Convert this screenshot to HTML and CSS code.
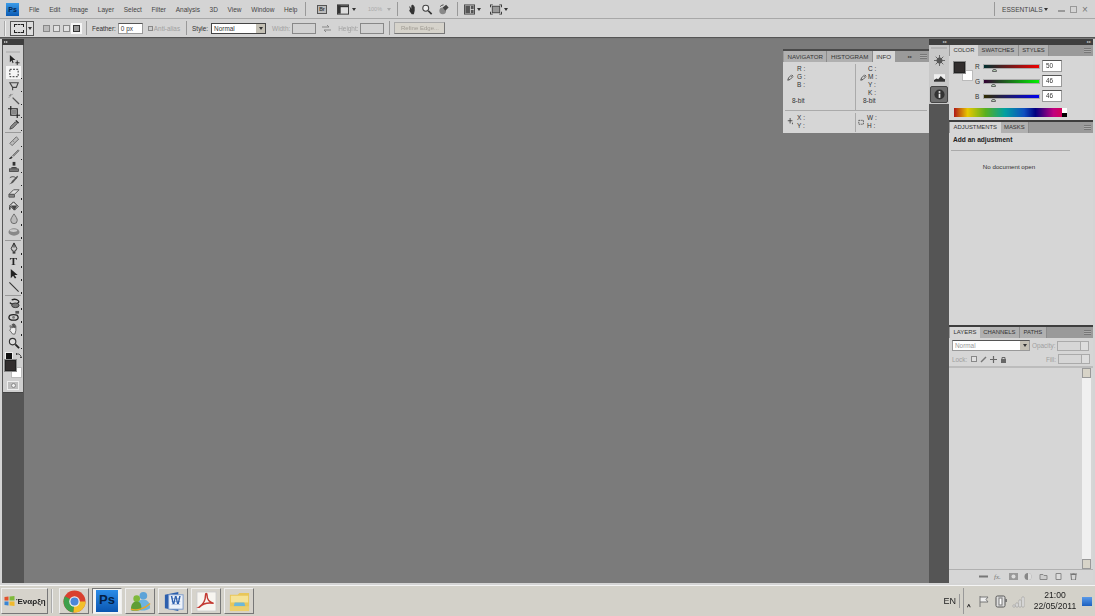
FILE: index.html
```html
<!DOCTYPE html>
<html lang="en">
<head>
    <meta charset="utf-8">
    <title>Adobe Photoshop CS4</title>
    <link rel="stylesheet" href="styles.css">
</head>
<body>
    <div class="menu-bar">
        <div class="ps-logo">Ps</div>
        <nav class="menu-items">
            <span>File</span><span>Edit</span><span>Image</span><span>Layer</span><span>Select</span><span>Filter</span><span>Analysis</span><span>3D</span><span>View</span><span>Window</span><span>Help</span>
        </nav>
        <div class="vsep sep-menu"></div>
        <div class="app-tools">
            <span class="br-box">Br</span>
            <svg class="icon-13 tool-view" viewBox="0 0 13 11"><rect x="0.5" y="0.5" width="12" height="10" fill="#ddd" stroke="#333"/><rect x="1" y="1" width="11" height="2" fill="#333"/><rect x="1" y="1" width="3" height="9" fill="#333"/></svg>
            <span class="arrow-down"></span>
            <span class="zoom-level">100%</span>
            <span class="arrow-down faded"></span>
            <div class="vsep sep-a"></div>
            <svg class="icon-13 tool-hand" viewBox="0 0 13 13"><path d="M3 6l-1-3 1 0 1.500 2.500V1.500h1v3.500V1h1v4V1.500h1V5.500V3h1v5l-1 4H5L2 8z" fill="#333"/></svg>
            <svg class="icon-13 tool-zoom" viewBox="0 0 13 13"><circle cx="5" cy="5" r="3.500" fill="#eee" stroke="#444" stroke-width="1.200"/><path d="M8 8l4 4" stroke="#333" stroke-width="2"/></svg>
            <svg class="icon-13 tool-rot" viewBox="0 0 13 13"><circle cx="5" cy="8" r="4" fill="#888"/><path d="M5 4l4-3 3 3-4 4z" fill="#444"/><path d="M2 3a6 6 0 0 1 4-2" stroke="#333" fill="none"/></svg>
            <div class="vsep sep-b"></div>
            <svg class="icon-13 tool-arr" viewBox="0 0 12 11"><rect x="0.500" y="0.500" width="11" height="10" fill="#ccc" stroke="#444"/><rect x="1.500" y="1.500" width="5" height="8" fill="#555"/><rect x="7.500" y="1.500" width="3" height="3.500" fill="#555"/><rect x="7.500" y="6" width="3" height="3.500" fill="#555"/></svg>
            <span class="arrow-down"></span>
            <svg class="icon-13 tool-screen" viewBox="0 0 13 11"><rect x="2.500" y="2" width="8" height="7" fill="#999" stroke="#444"/><path d="M0 0h3v1H1v2H0zM13 0h-3v1h2v2h1zM0 11h3v-1H1V8H0zM13 11h-3v-1h2V8h1z" fill="#333"/></svg>
            <span class="arrow-down"></span>
        </div>
        <div class="window-side">
            <div class="vsep"></div>
            <span class="workspace">ESSENTIALS</span>
            <span class="arrow-down"></span>
            <span class="win-btn win-min"></span>
            <span class="win-btn win-max"></span>
            <span class="win-btn win-close">×</span>
        </div>
    </div>

    <div class="options-bar">
        <div class="grip"></div>
        <div class="preset">
            <span class="preset-main"><span class="marquee-big"></span></span>
            <span class="preset-arrow"><span class="arrow-down"></span></span>
        </div>
        <div class="select-modes">
            <span class="mode"></span><span class="mode double"></span><span class="mode double"></span><span class="mode active"></span>
        </div>
        <div class="vsep sep-opt"></div>
        <label class="opt-label">Feather:</label>
        <span class="field feather">0 px</span>
        <span class="checkbox"></span>
        <span class="opt-label off antialias">Anti-alias</span>
        <div class="vsep sep-opt"></div>
        <label class="opt-label">Style:</label>
        <span class="field style-select">Normal<span class="select-btn"><span class="arrow-down"></span></span></span>
        <span class="opt-label off width-label">Width:</span>
        <span class="field blank"></span>
        <svg class="swap-icon" viewBox="0 0 9 7"><path d="M0 2h7M5 0l2 2M9 5H2M4 7L2 5" stroke="#888" fill="none"/></svg>
        <span class="opt-label off height-label">Height:</span>
        <span class="field blank"></span>
        <div class="vsep sep-h"></div>
        <span class="refine">Refine Edge...</span>
    </div>

    <div class="workspace-area">
        <aside class="left-col">
            <div class="strip-head"><span class="dbl">▸▸</span></div>
            <div class="toolbox">
                <div class="toolbox-grip"></div>
                <div class="tool corner-none"><svg viewBox="0 0 13 13"><path d="M2 1v8l2-2 1 3 1-.5-1-3h3z" fill="#222"/><path d="M10 7v5M8 9.500h4.500" stroke="#222"/></svg></div>
                <div class="tool active"><svg viewBox="0 0 13 13"><rect x="2" y="2.500" width="9" height="8" fill="none" stroke="#222" stroke-dasharray="2 1.500"/></svg></div>
                <div class="tool"><svg viewBox="0 0 13 13"><path d="M2 3l9 0-2 5-4 0-3-5zM5 8l0 3" fill="none" stroke="#444" stroke-width="1.200"/></svg></div>
                <div class="tool"><svg viewBox="0 0 13 13"><path d="M5 5l7 7" stroke="#555" stroke-width="1.400"/><path d="M3 1v2M1 3h2M5 1l-1 1M1 5l1-1" stroke="#777"/></svg></div>
                <div class="tool"><svg viewBox="0 0 13 13"><path d="M3 0v10h10M0 3h10v10" fill="none" stroke="#222" stroke-width="1.300"/><rect x="4" y="4" width="5" height="5" fill="#888"/></svg></div>
                <div class="tool"><svg viewBox="0 0 13 13"><path d="M2 11l1-3 5-5 2 2-5 5z" fill="#888" stroke="#333" stroke-width=".8"/><path d="M8 2l1-1 3 3-1 1z" fill="#222"/></svg></div>
                <div class="tool-sep"></div>
                <div class="tool"><svg viewBox="0 0 13 13"><path d="M2 9l7-7 2.500 2.500-7 7z" fill="#bbb" stroke="#666"/><path d="M5 6l2 2" stroke="#888"/></svg></div>
                <div class="tool"><svg viewBox="0 0 13 13"><path d="M1 12c1-2 2-2 3-3l1 1c-1 2-2 2-4 2z" fill="#333"/><path d="M5 8l6-6 1 1-6 6z" fill="#999" stroke="#444" stroke-width=".6"/></svg></div>
                <div class="tool"><svg viewBox="0 0 13 13"><rect x="5" y="1" width="3" height="4" fill="#333"/><path d="M3 8c0-2 7-2 7 0z" fill="#444"/><rect x="1.500" y="8.500" width="10" height="3" fill="#777" stroke="#333" stroke-width=".7"/></svg></div>
                <div class="tool"><svg viewBox="0 0 13 13"><path d="M1 11c3-1 3-4 5-5l4-4 1 1-5 6c-1 1-3 2-5 2z" fill="#555"/><path d="M2 4c3-2 6-1 7 1" stroke="#444" fill="none"/></svg></div>
                <div class="tool"><svg viewBox="0 0 13 13"><path d="M1 8l5-5h6l-5 5z" fill="#ddd" stroke="#555"/><path d="M1 8h6v3H1z" fill="#888" stroke="#555"/></svg></div>
                <div class="tool"><svg viewBox="0 0 13 13"><path d="M2 6l4-4 5 5-4 4z" fill="#ddd" stroke="#222"/><path d="M2 6c-1 2-1 4 0 5 1-1 1-3 0-5z" fill="#222"/><path d="M3 6h7l-3 5z" fill="#444"/></svg></div>
                <div class="tool"><svg viewBox="0 0 13 13"><path d="M6.500 1c2 3 3.500 5 3.500 7a3.500 3.500 0 0 1-7 0c0-2 1.500-4 3.500-7z" fill="#bbb" stroke="#666"/></svg></div>
                <div class="tool"><svg viewBox="0 0 13 13"><ellipse cx="6.500" cy="6.500" rx="6" ry="4" fill="#888"/><ellipse cx="6" cy="5" rx="4" ry="1.500" fill="#ccc"/></svg></div>
                <div class="tool-sep"></div>
                <div class="tool"><svg viewBox="0 0 13 13"><path d="M6.500 1l3 6-1.500 3H5L3.500 7z" fill="#ccc" stroke="#222"/><path d="M5 11h3v1.500H5z" fill="#222"/><path d="M6.500 2v4" stroke="#222"/></svg></div>
                <div class="tool tool-type">T</div>
                <div class="tool"><svg viewBox="0 0 13 13"><path d="M3 1v10l2.500-2.500 2 3 1.500-1-2-3h3.500z" fill="#222"/></svg></div>
                <div class="tool"><svg viewBox="0 0 13 13"><path d="M1.500 1.500l10 10" stroke="#333" stroke-width="1.100"/></svg></div>
                <div class="tool-sep"></div>
                <div class="tool"><svg viewBox="0 0 13 13"><path d="M4 3a5 2.500 0 1 1-2 3" fill="none" stroke="#222" stroke-width="1.400"/><ellipse cx="8" cy="9" rx="4" ry="2.500" fill="#777" stroke="#333"/></svg></div>
                <div class="tool"><svg viewBox="0 0 13 13"><ellipse cx="6" cy="8" rx="5" ry="3" fill="none" stroke="#222" stroke-width="1.400"/><rect x="8" y="1" width="4" height="3" fill="#555"/><circle cx="6" cy="8" r="1.500" fill="#777"/></svg></div>
                <div class="tool"><svg viewBox="0 0 13 13"><path d="M3 6l-1-3 1 0 1.500 2.500V1.500h1v3.500V1h1v4V1.500h1V5.500V3h1v5l-1 4H5L2 8z" fill="#eee" stroke="#333" stroke-width=".7"/></svg></div>
                <div class="tool"><svg viewBox="0 0 13 13"><circle cx="5" cy="5" r="3.500" fill="#ddd" stroke="#333" stroke-width="1.200"/><path d="M8 8l4 4" stroke="#222" stroke-width="2"/></svg></div>
                <div class="mini-colors">
                    <span class="mini-swatch"></span>
                    <svg viewBox="0 0 7 7"><path d="M1 2l3 0 2 2 0 2M1 2l1-1M1 2l1 1M6 6l-1-1M6 6l1-1" stroke="#333" fill="none" stroke-width=".8"/></svg>
                </div>
                <div class="big-colors"><span class="bg-swatch"></span><span class="fg-swatch"></span></div>
                <div class="quick-mask"><span></span></div>
            </div>
        </aside>

        <main class="canvas">
            <section class="info-panel">
                <div class="tabs">
                    <span class="tab">NAVIGATOR</span><span class="tab">HISTOGRAM</span><span class="tab active">INFO</span>
                    <span class="tabs-end"><span class="dbl-dark">▸▸</span><span class="panel-menu"></span></span>
                </div>
                <div class="info-top">
                    <div class="info-col">
                        <svg class="dropper" viewBox="0 0 9 9"><path d="M1 8l1-3 3-3 2 2-3 3zM6 1l2 2" stroke="#333" fill="none"/></svg>
                        <div class="info-labels"><span>R :</span><span>G :</span><span>B :</span></div>
                        <div class="bit">8-bit</div>
                    </div>
                    <div class="info-col right">
                        <svg class="dropper" viewBox="0 0 9 9"><path d="M1 8l1-3 3-3 2 2-3 3zM6 1l2 2" stroke="#333" fill="none"/></svg>
                        <div class="info-labels"><span>C :</span><span>M :</span><span>Y :</span><span>K :</span></div>
                        <div class="bit">8-bit</div>
                    </div>
                </div>
                <div class="info-bottom">
                    <div class="info-col short">
                        <svg class="dropper" viewBox="0 0 9 9"><path d="M4 0v7M1 3.500h6M7 6v2" stroke="#333" fill="none"/></svg>
                        <div class="info-labels"><span>X :</span><span>Y :</span></div>
                    </div>
                    <div class="info-col short right">
                        <svg class="dropper" viewBox="0 0 9 9"><path d="M1 3h6v5H1z" stroke="#444" fill="none" stroke-dasharray="2 1"/></svg>
                        <div class="info-labels"><span>W :</span><span>H :</span></div>
                    </div>
                </div>
            </section>
        </main>

        <aside class="dock-strip">
            <div class="strip-head"><span class="dbl end">▸▸</span></div>
            <div class="dock-icons">
                <div class="dock-grip"></div>
                <div class="dock-icon"><svg viewBox="0 0 13 13"><circle cx="6.500" cy="6.500" r="3.500" fill="#555"/><path d="M6.500 0v13M0 6.500h13M2 2l9 9M11 2l-9 9" stroke="#555"/></svg></div>
                <div class="dock-icon"><svg class="hist" viewBox="0 0 13 9"><rect width="13" height="9" fill="#eee"/><path d="M0 9V7l3-2 2 1 3-4 3 3 2 1v3z" fill="#333"/></svg></div>
                <div class="dock-icon active"><svg viewBox="0 0 13 13"><circle cx="6.500" cy="6.500" r="6" fill="#333"/><rect x="5.500" y="5.500" width="2" height="5" fill="#eee"/><rect x="5.500" y="2.500" width="2" height="2" fill="#eee"/></svg></div>
            </div>
        </aside>

        <aside class="right-col">
            <div class="strip-head"><span class="dbl end">▸▸</span></div>

            <section class="panel color-panel">
                <div class="tabs">
                    <span class="tab active">COLOR</span><span class="tab">SWATCHES</span><span class="tab">STYLES</span>
                    <span class="tabs-end"><span class="panel-menu"></span></span>
                </div>
                <div class="color-body">
                    <div class="color-swatches"><span class="bg-swatch"></span><span class="fg-swatch"></span></div>
                    <div class="sliders">
                        <div class="slider-row"><span>R</span><div class="slider-track red"><i class="thumb t-r"></i></div><span class="field num">50</span></div>
                        <div class="slider-row"><span>G</span><div class="slider-track green"><i class="thumb t-g"></i></div><span class="field num">46</span></div>
                        <div class="slider-row"><span>B</span><div class="slider-track blue"><i class="thumb t-g"></i></div><span class="field num">46</span></div>
                    </div>
                </div>
                <div class="spectrum"><span class="spectrum-end"></span></div>
            </section>

            <section class="panel adjust-panel">
                <div class="tabs">
                    <span class="tab active">ADJUSTMENTS</span><span class="tab">MASKS</span>
                    <span class="tabs-end"><span class="panel-menu"></span></span>
                </div>
                <h2 class="adjust-title">Add an adjustment</h2>
                <div class="adjust-rule"></div>
                <p class="no-doc">No document open</p>
            </section>

            <section class="panel layers-panel">
                <div class="tabs">
                    <span class="tab active">LAYERS</span><span class="tab">CHANNELS</span><span class="tab">PATHS</span>
                    <span class="tabs-end"><span class="panel-menu"></span></span>
                </div>
                <div class="layers-row first">
                    <span class="field blend">Normal<span class="select-btn"><span class="arrow-down"></span></span></span>
                    <span class="opt-label off">Opacity:</span>
                    <span class="stepper"><i></i></span>
                </div>
                <div class="layers-row">
                    <span class="opt-label off">Lock:</span>
                    <span class="lock-icons">
                        <span class="lock-box"></span>
                        <svg viewBox="0 0 7 7"><path d="M1 6l5-5" stroke="#777" stroke-width="1.400"/></svg>
                        <svg viewBox="0 0 7 7"><path d="M3.500 0v7M0 3.500h7" stroke="#666" stroke-width="1.200"/></svg>
                        <svg viewBox="0 0 7 7"><rect x="1" y="3" width="5" height="4" fill="#666"/><path d="M2 3V1.500h3V3" stroke="#666" fill="none"/></svg>
                    </span>
                    <span class="opt-label off fill-label">Fill:</span>
                    <span class="stepper"><i></i></span>
                </div>
                <div class="layers-list">
                    <div class="scrollbar"><span class="scroll-btn up"></span><span class="scroll-btn down"></span></div>
                </div>
                <div class="layers-foot">
                    <svg viewBox="0 0 9 7"><path d="M0 3.500h9" stroke="#777" stroke-width="2"/></svg>
                    <span class="fx">fx.</span>
                    <svg viewBox="0 0 9 7"><rect width="9" height="7" fill="#999"/><circle cx="4.500" cy="3.500" r="2" fill="#ddd"/></svg>
                    <svg viewBox="0 0 9 7"><circle cx="4" cy="3.500" r="3.500" fill="#888"/><path d="M4 0a3.500 3.500 0 0 1 0 7z" fill="#ddd"/></svg>
                    <svg viewBox="0 0 9 7"><path d="M1 1.500h3l1 1h3V6.500H1z" fill="#ccc" stroke="#888"/></svg>
                    <svg viewBox="0 0 9 7"><path d="M2 .5h5v6H2z" fill="#ddd" stroke="#888"/></svg>
                    <svg viewBox="0 0 9 7"><path d="M2 1.500h5L6.500 7h-4zM1 1h7M3.500 0h2" stroke="#777" fill="none"/></svg>
                </div>
            </section>
        </aside>
    </div>

    <footer class="taskbar">
        <div class="start-btn">
            <svg viewBox="0 0 10 10"><path d="M0 1l4-.5V4.500H0z" fill="#e2512b"/><path d="M5 .4L10 0v4.500H5z" fill="#7fb93a"/><path d="M0 5.500h4V9.500L0 9z" fill="#3a86d4"/><path d="M5 5.500h5V10L5 9.600z" fill="#f0b92d"/></svg>
            <span>Έναρξη</span>
        </div>
        <div class="task-sep"></div>
        <div class="task-btn">
            <svg viewBox="0 0 24 24"><circle cx="12" cy="12" r="11.500" fill="#d9402f"/><path d="M12 12L2 6.500A11.500 11.500 0 0 0 11 23.500z" fill="#3ea04a"/><path d="M12 12h11.500A11.500 11.500 0 0 1 11 23.500z" fill="#f2c029"/><circle cx="12" cy="12" r="5.500" fill="#eee"/><circle cx="12" cy="12" r="4.200" fill="#4a86d8"/></svg>
        </div>
        <div class="task-btn active"><span class="ps-big">Ps</span></div>
        <div class="task-btn">
            <svg viewBox="0 0 24 24"><circle cx="15" cy="6" r="4" fill="#5da3d8"/><path d="M8 20c0-8 3-10 7-10s7 3 7 9c-4 3-10 3-14 1z" fill="#6db3e0"/><circle cx="8" cy="9" r="3.500" fill="#7fb93a"/><path d="M2 21c0-6 2-9 6-9s5 3 5 8c-3 2-8 2-11 1z" fill="#5f9e35"/><path d="M2 20c6 2 14 0 20-6" stroke="#e8a62a" stroke-width="1.500" fill="none"/></svg>
        </div>
        <div class="task-btn">
            <svg viewBox="0 0 24 24"><path d="M3 5l14-3v20L3 19z" fill="#2c5fad"/><rect x="7" y="5" width="15" height="15" fill="#eef3fa" stroke="#7c9bcb"/><path d="M10 9h9M10 12h9M10 15h9" stroke="#a8bcdc"/><text x="9" y="15" class="word-w">W</text></svg>
        </div>
        <div class="task-btn">
            <svg viewBox="0 0 24 24"><rect x="2" y="2" width="20" height="20" fill="#f7f5f0" stroke="#ccc"/><path d="M4 18c5-3 7-8 7-13 0-2 1.500-2 1.500 0 0 5 3 8 7 9-5-1-11 0-15 4z" fill="none" stroke="#c33a33" stroke-width="1.500"/></svg>
        </div>
        <div class="task-btn">
            <svg viewBox="0 0 24 24"><path d="M2 5h8l2-2h10v18H2z" fill="#e8c659"/><rect x="3" y="6" width="18" height="7" fill="#f5e296"/><path d="M7 13h10l1 4H6z" fill="#6db8d8"/><rect x="2" y="17" width="20" height="5" fill="#eccf6b"/></svg>
        </div>
        <div class="tray-side">
            <span class="lang">EN</span>
            <div class="tray">
                <span class="tray-arrow">‸</span>
                <svg viewBox="0 0 13 13"><path d="M2 1v11M2 2h8l-2 2.500L10 7H2" fill="#eee" stroke="#777"/></svg>
                <svg viewBox="0 0 13 13"><rect x="1" y="1" width="9" height="11" rx="1.500" fill="#ddd" stroke="#555"/><rect x="4" y="3" width="3" height="7" fill="#fff" stroke="#777"/><rect x="10" y="4" width="2" height="3" fill="#777"/></svg>
                <svg viewBox="0 0 13 13"><path d="M1 12V10h2v2zM4 12V8h2v4zM7 12V5h2v7zM10 12V2h2v10z" fill="#eee" stroke="#999" stroke-width=".6"/></svg>
                <div class="clock"><span>21:00</span><span>22/05/2011</span></div>
                <span class="show-desktop"></span>
            </div>
        </div>
    </footer>
</body>
</html>
```

FILE: styles.css
```css
* {
    margin: 0;
    padding: 0;
    box-sizing: border-box;
}

body {
    font-family: "Liberation Sans", Arial, sans-serif;
    font-size: 6.5px;
    color: #333;
    width: 1095px;
    height: 616px;
    overflow: hidden;
    background: #d4d4d4;
    display: flex;
    flex-direction: column;
    filter: blur(0.3px);
}

svg {
    display: block;
    flex: none;
}

.vsep {
    width: 1px;
    height: 14px;
    background: #999;
    flex: none;
}

.arrow-down {
    display: inline-block;
    width: 0;
    height: 0;
    border-left: 2px solid transparent;
    border-right: 2px solid transparent;
    border-top: 3px solid #333;
    flex: none;
}

.arrow-down.faded {
    border-top-color: #aaa;
}

/* top menu */
.menu-bar {
    height: 19px;
    display: flex;
    align-items: center;
    padding-left: 6px;
    background: #d4d4d4;
    border-bottom: 1px solid #a8a8a8;
}

.ps-logo {
    width: 13px;
    height: 13px;
    background: linear-gradient(#3b9be8, #0c5bb4);
    color: #04254f;
    font-size: 7px;
    font-weight: bold;
    text-align: center;
    line-height: 13px;
}

.menu-items {
    display: flex;
    gap: 9.7px;
    margin-left: 10px;
    color: #444;
    font-size: 6.5px;
    width: 270px;
}

.sep-menu {
    margin-left: 6px;
}

.app-tools {
    display: flex;
    align-items: center;
    margin-left: 11px;
}

.br-box {
    width: 10px;
    height: 9px;
    background: #bbb;
    border: 1px solid #555;
    font-size: 5px;
    line-height: 7px;
    text-align: center;
    font-weight: bold;
}

.icon-13 {
    width: 12px;
    height: 11px;
}

.tool-view {
    margin-left: 10px;
    margin-right: 3px;
}

.zoom-level {
    margin-left: 12px;
    width: 17px;
    color: #aaa;
    font-size: 5.5px;
}

.arrow-down.faded {
    margin-left: 2px;
}

.sep-a {
    margin-left: 6px;
}

.tool-hand {
    margin-left: 9px;
}

.tool-zoom {
    margin-left: 2px;
}

.tool-rot {
    margin-left: 5px;
}

.sep-b {
    margin-left: 7px;
}

.tool-arr {
    margin-left: 6px;
    margin-right: 2px;
    width: 11px;
}

.tool-screen {
    margin-left: 9px;
    margin-right: 2px;
}

.window-side {
    margin-left: auto;
    display: flex;
    align-items: center;
    padding-right: 6px;
}

.workspace {
    width: 38px;
    margin-left: 7px;
    margin-right: 4px;
    font-size: 6.6px;
    white-space: nowrap;
    color: #444;
}

.win-btn {
    width: 7px;
    height: 7px;
    position: relative;
    margin-left: 5px;
    color: #777;
}

.win-min {
    margin-left: 10px;
    border-bottom: 2px solid #999;
    height: 5px;
}

.win-max {
    border: 1px solid #999;
}

.win-close {
    font-size: 10px;
    line-height: 7px;
}

/* options */
.options-bar {
    height: 19px;
    display: flex;
    align-items: center;
    padding-left: 4px;
    border-bottom: 1px solid #555;
    background: #d4d4d4;
}

.grip {
    width: 2px;
    height: 15px;
    background: #aaa;
    border-right: 1px solid #eee;
}

.preset {
    display: flex;
    margin-left: 4px;
    height: 15px;
    border: 1px solid #555;
    background: #ddd;
}

.preset-main {
    width: 16px;
    display: flex;
    align-items: center;
    justify-content: center;
    border-right: 1px solid #555;
}

.marquee-big {
    width: 10px;
    height: 9px;
    border: 1px dashed #222;
}

.preset-arrow {
    width: 6px;
    display: flex;
    align-items: center;
    justify-content: center;
}

.select-modes {
    display: flex;
    margin-left: 9px;
    gap: 3px;
}

.mode {
    width: 7px;
    height: 7px;
    background: #bbb;
    border: 1px solid #888;
}

.mode.double {
    background: #e0e0e0;
}

.mode.active {
    outline: 2px solid #f6f6f6;
    background: #999;
    border-color: #333;
}

.sep-opt {
    margin-left: 6px;
    margin-right: 5px;
}

.opt-label {
    font-size: 6.4px;
    color: #333;
    flex: none;
}

.opt-label.off {
    color: #a0a0a0;
}

.field {
    background: #fff;
    border: 1px solid #999;
    border-top-color: #555;
    height: 11px;
    line-height: 9px;
    font-size: 6.4px;
    padding-left: 2px;
    flex: none;
    position: relative;
}

.feather {
    width: 25px;
    margin-left: 2px;
}

.checkbox {
    width: 5px;
    height: 5px;
    margin-left: 5px;
    border: 1px solid #888;
    background: #ccc;
}

.antialias {
    margin-left: 1px;
}

.style-select {
    width: 55px;
    margin-left: 3px;
    border: 1px solid #444;
}

.select-btn {
    position: absolute;
    right: 0;
    top: 0;
    width: 9px;
    height: 9px;
    background: #c4c0b4;
    display: flex;
    align-items: center;
    justify-content: center;
}

.width-label {
    margin-left: 6px;
}

.field.blank {
    width: 24px;
    margin-left: 2px;
    background: #d2d2d2;
    border-color: #888;
}

.swap-icon {
    width: 9px;
    height: 7px;
    margin: 0 7px 0 6px;
}

.sep-h {
    margin-left: 5px;
}

.refine {
    margin-left: 4px;
    width: 51px;
    height: 12px;
    line-height: 10px;
    text-align: center;
    font-size: 6px;
    color: #a09c94;
    background: #d6d3cb;
    border: 1px solid #aaa;
    border-right-color: #777;
    border-bottom-color: #777;
}

/* workspace */
.workspace-area {
    flex: 1;
    height: 547px;
    display: flex;
    padding: 0 2px 2px 2px;
    border-top: 1px solid #777;
}

.left-col {
    width: 22px;
    background: #555;
    flex: none;
}

.strip-head {
    height: 6px;
    background: #3e3e3e;
    display: flex;
    align-items: center;
}

.dbl {
    color: #ccc;
    font-size: 4px;
    line-height: 6px;
    padding-left: 2px;
}

.dbl.end {
    margin-left: auto;
    padding-right: 2px;
}

.toolbox {
    background: #cfcfcf;
    margin-left: 1px;
    width: 20px;
    height: 348px;
    padding-top: 6px;
    border-bottom: 1px solid #444;
}

.toolbox-grip {
    height: 2px;
    margin: 0 3px 0;
    background: #bbb;
}

.tool {
    height: 13.05px;
    width: 15px;
    margin-left: 3px;
    display: flex;
    align-items: center;
    justify-content: center;
    position: relative;
}

.tool svg {
    width: 12px;
    height: 12px;
}

.tool::after {
    content: "";
    position: absolute;
    right: -1px;
    bottom: 0;
    width: 1.500px;
    height: 1.500px;
    background: #222;
}

.tool.corner-none::after {
    display: none;
}

.tool.active {
    background: #f5f5f5;
}

.tool-type {
    font-family: "Liberation Serif", serif;
    font-weight: bold;
    font-size: 11px;
    color: #222;
}

.tool-sep {
    height: 1px;
    background: #9a9a9a;
    margin: 1px 2px;
}

.mini-colors {
    display: flex;
    gap: 3px;
    margin: 3px 0 0 3px;
    align-items: center;
}

.mini-swatch {
    width: 6px;
    height: 6px;
    background: #111;
    outline: 1px solid #eee;
}

.mini-colors svg {
    width: 7px;
    height: 7px;
}

.big-colors {
    position: relative;
    margin: 1px 0 0 2px;
    width: 17px;
    height: 18px;
}

.color-swatches {
    position: relative;
    width: 19px;
    height: 19px;
    margin: 2px 0 0 5px;
    flex: none;
}

.fg-swatch {
    position: absolute;
    left: 0;
    top: 0;
    width: 11px;
    height: 11px;
    background: #322e2e;
    border: 1px solid #222;
    outline: 1px solid #888;
}

.bg-swatch {
    position: absolute;
    right: 0;
    bottom: 0;
    width: 11px;
    height: 11px;
    background: #fff;
    border: 1px solid #bbb;
}

.quick-mask {
    margin: 3px 0 0 4px;
    width: 12px;
    height: 9px;
    background: #bdbdbd;
    border: 1px solid #eee;
    display: flex;
    align-items: center;
    justify-content: center;
}

.quick-mask span {
    width: 5px;
    height: 5px;
    border-radius: 50%;
    background: #eee;
    border: 1px solid #888;
}

.canvas {
    flex: 1;
    background: #7b7b7b;
    position: relative;
}

.dock-strip {
    width: 20px;
    flex: none;
    background: #555;
}

.dock-icons {
    background: #c8c8c8;
    height: 59px;
    padding-top: 2px;
}

.dock-grip {
    height: 2px;
    margin: 0 2px 3px;
    background: #b4b4b4;
}

.dock-icon {
    height: 17px;
    display: flex;
    align-items: center;
    justify-content: center;
}

.dock-icon svg {
    width: 11px;
    height: 11px;
}

.dock-icon svg.hist {
    height: 8px;
}

.dock-icon.active {
    background: #6f6f6f;
    margin: 0 1px;
    border: 1px solid #444;
    border-radius: 2px;
}

.right-col {
    width: 144px;
    flex: none;
    display: flex;
    flex-direction: column;
    background: #3e3e3e;
}

/* panels */
.tabs {
    height: 11px;
    display: flex;
    background: #9a9a9a;
    align-items: stretch;
    font-size: 6.2px;
    color: #333;
    padding-left: 1px;
}

.panel .tabs {
    font-size: 5.9px;
}

.tab {
    padding: 0 3.5px;
    line-height: 11px;
    background: #b0b0b0;
    border-right: 1px solid #8c8c8c;
    white-space: nowrap;
}

.tab.active {
    background: #d6d6d6;
    border-right: none;
}

.tabs-end {
    margin-left: auto;
    display: flex;
    align-items: center;
    padding-right: 2px;
    gap: 8px;
}

.panel-menu {
    width: 7px;
    height: 5px;
    background: repeating-linear-gradient(#777 0 1px, #aaa 1px 2px);
}

.dbl-dark {
    font-size: 4px;
    color: #333;
}

.panel {
    background: #d6d6d6;
}

.color-panel {
    height: 75px;
}

.color-body {
    display: flex;
    padding-top: 4px;
}

.sliders {
    margin-left: 2px;
    display: flex;
    flex-direction: column;
    gap: 3px;
    margin-top: 0;
    font-size: 6.5px;
}

.slider-row {
    height: 12px;
    display: flex;
    align-items: center;
}

.slider-row > span:first-child {
    width: 9px;
}

.slider-track {
    width: 55px;
    height: 3px;
    position: relative;
    outline: 1px solid #aaa;
}

.slider-track.red {
    background: linear-gradient(90deg, #003030, #f00000);
}

.slider-track.green {
    background: linear-gradient(90deg, #320032, #00f000);
}

.slider-track.blue {
    background: linear-gradient(90deg, #322e00, #0000f0);
}

.thumb {
    position: absolute;
    top: 4px;
    width: 5px;
    height: 3px;
    background: #bcd8bc;
    border: 1px solid #666;
    border-radius: 2px 2px 0 0;
}

.t-r {
    left: 8px;
}

.t-g {
    left: 7px;
}

.field.num {
    width: 20px;
    height: 12px;
    line-height: 10px;
    margin-left: 3px;
    padding-left: 3px;
}

.spectrum {
    height: 9px;
    width: 113px;
    margin: 6px 0 0 5px;
    position: relative;
    background: linear-gradient(90deg, #b01818, #e8c800 12%, #58b020 28%, #00a0a0 45%, #1050c0 62%, #000080 72%, #c00080 88%, #e00040);
}

.spectrum-end {
    position: absolute;
    right: 0;
    top: 0;
    width: 5px;
    height: 9px;
    background: linear-gradient(#fff 50%, #000 50%);
}

.adjust-panel {
    height: 203px;
    margin-top: 2px;
}

.adjust-title {
    font-size: 6.6px;
    font-weight: bold;
    color: #222;
    margin: 3px 0 0 4px;
}

.adjust-rule {
    height: 1px;
    background: #aaa;
    margin: 7px 23px 0 2px;
}

.no-doc {
    text-align: center;
    width: 120px;
    margin-top: 12px;
    font-size: 6.2px;
}

.layers-panel {
    flex: 1;
    margin-top: 2px;
    display: flex;
    flex-direction: column;
}

.layers-row {
    height: 14px;
    display: flex;
    align-items: center;
    padding-left: 3px;
}

.layers-row.first {
    margin-top: 1px;
    height: 13px;
}

.blend {
    width: 78px;
    color: #999;
    margin-right: 2px;
}

.stepper {
    width: 32px;
    height: 10px;
    margin-left: 2px;
    border: 1px solid #aaa;
    position: relative;
    flex: none;
}

.stepper i {
    position: absolute;
    right: 0;
    top: 0;
    width: 8px;
    height: 8px;
    background: #ddd;
    border-left: 1px solid #aaa;
}

.lock-icons {
    display: flex;
    gap: 3px;
    margin-left: 4px;
    align-items: center;
}

.lock-icons svg {
    width: 7px;
    height: 7px;
}

.lock-box {
    width: 6px;
    height: 6px;
    border: 1px solid #888;
    background: #e0e0e0;
}

.fill-label {
    margin-left: auto;
}

.layers-row .stepper:last-child {
    margin-right: 3px;
}

.layers-list {
    flex: 1;
    border-top: 2px solid #bcbcbc;
    border-bottom: 1px solid #b0b0b0;
    display: flex;
    justify-content: flex-end;
    padding-right: 2px;
}

.scrollbar {
    width: 9px;
    background: #f0f0f0;
    display: flex;
    flex-direction: column;
    justify-content: space-between;
}

.scroll-btn {
    height: 10px;
    background: #d8d4c8;
    border: 1px solid #999;
}

.layers-foot {
    height: 13px;
    display: flex;
    align-items: center;
    gap: 6px;
    justify-content: flex-end;
    padding-right: 15px;
}

.layers-foot svg {
    width: 9px;
    height: 7px;
}

.fx {
    font-family: "Liberation Serif", serif;
    font-size: 7px;
    font-style: italic;
    color: #777;
    width: 9px;
}

/* floating info panel */
.info-panel {
    position: absolute;
    right: 0;
    top: 10px;
    width: 146px;
    height: 84px;
    background: #d6d6d6;
    border-top: 2px solid #4a4a4a;
}

.info-top {
    display: flex;
    height: 46px;
    margin-top: 2px;
}

.info-col {
    width: 72px;
    position: relative;
    padding-left: 14px;
}

.info-col.right {
    border-left: 1px solid #aaa;
    width: 73px;
    padding-left: 12px;
}

.info-col .dropper {
    position: absolute;
    left: 4px;
    top: 10px;
    width: 7px;
    height: 7px;
}

.info-labels {
    display: flex;
    flex-direction: column;
    line-height: 8px;
    padding-top: 1px;
}

.bit {
    position: absolute;
    left: 9px;
    top: 33px;
    line-height: 8px;
}

.info-col.right .bit {
    left: 7px;
}

.info-bottom {
    display: flex;
    border-top: 1px solid #aaa;
    margin: 0 2px;
    padding-top: 2px;
    height: 22px;
}

.info-col.short {
    padding-left: 12px;
    width: 70px;
}

.info-col.short .dropper {
    left: 2px;
    top: 5px;
}

.info-col.short.right {
    padding-left: 11px;
}

/* taskbar */
.taskbar {
    height: 31px;
    flex: none;
    display: flex;
    align-items: center;
    background: #d3d1c9;
    border-top: 1px solid #f4f4f4;
    padding-left: 1px;
    gap: 3px;
}

.start-btn {
    width: 47px;
    height: 26px;
    display: flex;
    align-items: center;
    gap: 1px;
    padding-left: 2px;
    background: #d6d3cb;
    border: 1px solid #eee;
    border-right-color: #777;
    border-bottom-color: #777;
    font-size: 8px;
    font-weight: bold;
    color: #222;
}

.start-btn svg {
    width: 11px;
    height: 10px;
}

.task-sep {
    width: 2px;
    height: 24px;
    background: #aaa;
    border-right: 1px solid #eee;
    margin: 0 3px 0 0;
}

.task-btn {
    width: 30px;
    height: 26px;
    display: flex;
    align-items: center;
    justify-content: center;
    background: #d6d3cb;
    border: 1px solid #eee;
    border-right-color: #777;
    border-bottom-color: #777;
}

.task-btn svg {
    width: 23px;
    height: 23px;
}

.task-btn.active {
    background: #f4f4f2;
    border-color: #777 #eee #eee #777;
}

.ps-big {
    width: 22px;
    height: 22px;
    background: linear-gradient(#2a8ce8, #0a55b0);
    color: #041f45;
    font-size: 13px;
    font-weight: bold;
    text-align: center;
    line-height: 20px;
}

.word-w {
    font-family: "Liberation Sans", sans-serif;
    font-size: 11px;
    font-weight: bold;
    fill: #2c5fad;
}

.tray-side {
    margin-left: auto;
    display: flex;
    align-items: center;
    height: 26px;
}

.lang {
    font-size: 9px;
    color: #222;
    padding-right: 3px;
    border-right: 1px solid #999;
    margin-right: 3px;
    line-height: 14px;
}

.tray {
    width: 132px;
    height: 26px;
    display: flex;
    align-items: center;
    border-left: 1px solid #999;
    padding-left: 3px;
    gap: 4px;
}

.tray-arrow {
    width: 5px;
    font-size: 9px;
    font-weight: bold;
    color: #222;
    margin-right: 2px;
}

.tray svg {
    width: 13px;
    height: 13px;
}

.clock {
    display: flex;
    flex-direction: column;
    align-items: center;
    width: 46px;
    margin-left: 3px;
    font-size: 8.6px;
    line-height: 11px;
    color: #222;
}

.show-desktop {
    width: 10px;
    height: 9px;
    background: linear-gradient(#5a9ae8, #1c60c0);
}
```
